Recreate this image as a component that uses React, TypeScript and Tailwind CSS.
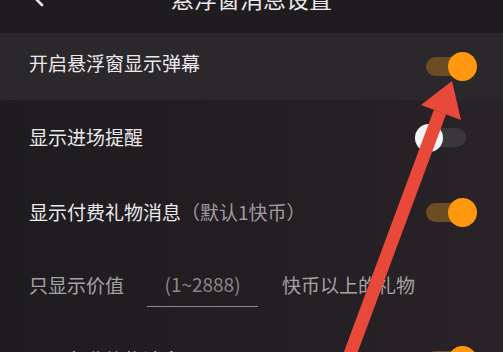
import React from 'react'

const font = { fontFamily: '"Noto Sans CJK SC", "Noto Sans", sans-serif' }

function Toggle({ on, className = '' }: { on: boolean; className?: string }) {
  if (on) {
    return (
      <div className={`relative w-[51px] h-[29px] flex items-center ${className}`}>
        <div className="w-[46px] h-[19px] rounded-full bg-[#6d4b25]" />
        <div className="absolute right-0 top-0 w-[29px] h-[29px] rounded-full bg-[#ff980f]" />
      </div>
    )
  }
  return (
    <div className={`relative w-[51px] h-[28px] flex items-center justify-end ${className}`}>
      <div className="w-[46px] h-[19px] rounded-full bg-[#3a373a]" />
      <div className="absolute left-0 top-0 w-[28px] h-[28px] rounded-full bg-[#f4f4f4]" />
    </div>
  )
}

export default function App() {
  return (
    <div
      className="relative w-[503px] h-[352px] overflow-hidden bg-gradient-to-r from-[#1f1c20] via-[#221e22] to-[#2a2327] text-[19px] text-[#ebe9eb]"
      style={font}
    >
      {/* header, cut off at the top */}
      <div className="relative h-[33px] overflow-hidden bg-[#1f1c20]">
        <div className="-mt-[17px] h-[30px] flex items-center justify-center leading-none text-[23px]">
          悬浮窗消息设置
        </div>
        <svg className="absolute left-[28px] top-[-13px]" width="20" height="20" viewBox="0 0 20 20">
          <path d="M14 2 L6 10 L14 18" fill="none" stroke="#ebe9eb" strokeWidth="2.6" strokeLinecap="round" />
        </svg>
      </div>

      <div className="h-[67px] flex items-center justify-between pl-[29px] pr-[26px] bg-[#2b282c]">
        <span className="-mt-[6px]">开启悬浮窗显示弹幕</span>
        <Toggle on />
      </div>

      <div className="h-[75px] flex items-center justify-between pl-[29px] pr-[37px]">
        <span>显示进场提醒</span>
        <Toggle on={false} />
      </div>

      <div className="h-[75px] flex items-center justify-between pl-[29px] pr-[26px]">
        <span>
          显示付费礼物消息<span className="text-[#9f9c9f]">（默认1快币）</span>
        </span>
        <Toggle on />
      </div>

      <div className="h-[70px] flex items-center pl-[29px] text-[#a5a2a5]">
        <span>只显示价值</span>
        <div className="ml-[23px] w-[111px] h-[44px] flex items-center justify-center border-b border-[#8d8a8d] mt-[-1px] text-[#8a878a]">
          (1~2888)
        </div>
        <span className="ml-[24px]">快币以上的礼物</span>
      </div>

      <div className="h-[75px] flex items-center justify-between pl-[29px] pr-[26px]">
        <span className="mt-[6px]">显示免费礼物消息</span>
        <Toggle on className="mt-[6px]" />
      </div>

      {/* red annotation arrow */}
      <svg className="absolute inset-0 pointer-events-none" width="503" height="352" viewBox="0 0 503 352">
        <line x1="346" y1="365" x2="440" y2="112" stroke="#e8493b" strokeWidth="13" />
        <polygon points="452,81 421,105 461,120" fill="#e8493b" />
      </svg>
    </div>
  )
}
